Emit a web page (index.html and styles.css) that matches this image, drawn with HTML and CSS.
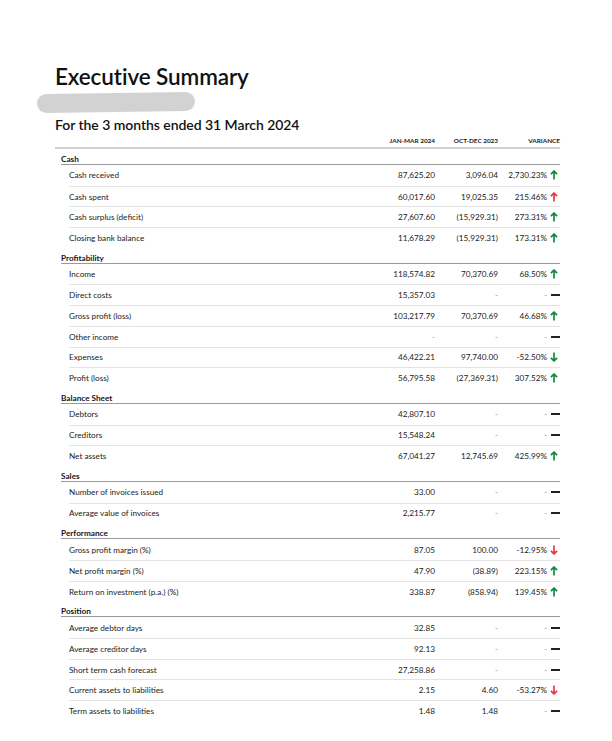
FILE: index.html
```html
<!DOCTYPE html>
<html>
<head>
<meta charset="utf-8">
<link rel="stylesheet" href="styles.css">
<title>Executive Summary</title>
</head>
<body>
<svg width="0" height="0" class="defs">
  <defs>
    <symbol id="up" viewBox="0 0 8 10"><path d="M4 9.6V1.2M0.9 4.2L4 1.1L7.1 4.2" fill="none" stroke="currentColor" stroke-width="1.7" stroke-linecap="butt" stroke-linejoin="miter"/></symbol>
    <symbol id="down" viewBox="0 0 8 10"><path d="M4 0.4V8.8M0.9 5.8L4 8.9L7.1 5.8" fill="none" stroke="currentColor" stroke-width="1.7" stroke-linecap="butt" stroke-linejoin="miter"/></symbol>
  </defs>
</svg>
<div class="page">
  <h1 class="title">Executive Summary</h1>
  <div class="redact"></div>
  <h2 class="subtitle">For the 3 months ended 31 March 2024</h2>

  <div class="table">
    <div class="thead">
      <span class="lbl"></span>
      <span class="c1">JAN-MAR 2024</span>
      <span class="c2">OCT-DEC 2023</span>
      <span class="c3h">VARIANCE</span>
    </div>

    <div class="section">
      <div class="sec-title">Cash</div>
      <div class="row"><span class="lbl">Cash received</span><span class="c1">87,625.20</span><span class="c2">3,096.04</span><span class="c3">2,730.23%</span><span class="ic"><svg class="arrow good"><use href="#up"/></svg></span></div>
      <div class="row"><span class="lbl">Cash spent</span><span class="c1">60,017.60</span><span class="c2">19,025.35</span><span class="c3">215.46%</span><span class="ic"><svg class="arrow bad"><use href="#up"/></svg></span></div>
      <div class="row"><span class="lbl">Cash surplus (deficit)</span><span class="c1">27,607.60</span><span class="c2">(15,929.31)</span><span class="c3">273.31%</span><span class="ic"><svg class="arrow good"><use href="#up"/></svg></span></div>
      <div class="row"><span class="lbl">Closing bank balance</span><span class="c1">11,678.29</span><span class="c2">(15,929.31)</span><span class="c3">173.31%</span><span class="ic"><svg class="arrow good"><use href="#up"/></svg></span></div>
    </div>

    <div class="section">
      <div class="sec-title">Profitability</div>
      <div class="row"><span class="lbl">Income</span><span class="c1">118,574.82</span><span class="c2">70,370.69</span><span class="c3">68.50%</span><span class="ic"><svg class="arrow good"><use href="#up"/></svg></span></div>
      <div class="row"><span class="lbl">Direct costs</span><span class="c1">15,357.03</span><span class="c2 nil">-</span><span class="c3 nil">-</span><span class="ic"><i class="dash"></i></span></div>
      <div class="row"><span class="lbl">Gross profit (loss)</span><span class="c1">103,217.79</span><span class="c2">70,370.69</span><span class="c3">46.68%</span><span class="ic"><svg class="arrow good"><use href="#up"/></svg></span></div>
      <div class="row"><span class="lbl">Other income</span><span class="c1 nil">-</span><span class="c2 nil">-</span><span class="c3 nil">-</span><span class="ic"><i class="dash"></i></span></div>
      <div class="row"><span class="lbl">Expenses</span><span class="c1">46,422.21</span><span class="c2">97,740.00</span><span class="c3">-52.50%</span><span class="ic"><svg class="arrow good"><use href="#down"/></svg></span></div>
      <div class="row"><span class="lbl">Profit (loss)</span><span class="c1">56,795.58</span><span class="c2">(27,369.31)</span><span class="c3">307.52%</span><span class="ic"><svg class="arrow good"><use href="#up"/></svg></span></div>
    </div>

    <div class="section">
      <div class="sec-title">Balance Sheet</div>
      <div class="row"><span class="lbl">Debtors</span><span class="c1">42,807.10</span><span class="c2 nil">-</span><span class="c3 nil">-</span><span class="ic"><i class="dash"></i></span></div>
      <div class="row"><span class="lbl">Creditors</span><span class="c1">15,548.24</span><span class="c2 nil">-</span><span class="c3 nil">-</span><span class="ic"><i class="dash"></i></span></div>
      <div class="row"><span class="lbl">Net assets</span><span class="c1">67,041.27</span><span class="c2">12,745.69</span><span class="c3">425.99%</span><span class="ic"><svg class="arrow good"><use href="#up"/></svg></span></div>
    </div>

    <div class="section">
      <div class="sec-title">Sales</div>
      <div class="row"><span class="lbl">Number of invoices issued</span><span class="c1">33.00</span><span class="c2 nil">-</span><span class="c3 nil">-</span><span class="ic"><i class="dash"></i></span></div>
      <div class="row"><span class="lbl">Average value of invoices</span><span class="c1">2,215.77</span><span class="c2 nil">-</span><span class="c3 nil">-</span><span class="ic"><i class="dash"></i></span></div>
    </div>

    <div class="section">
      <div class="sec-title">Performance</div>
      <div class="row"><span class="lbl">Gross profit margin (%)</span><span class="c1">87.05</span><span class="c2">100.00</span><span class="c3">-12.95%</span><span class="ic"><svg class="arrow bad"><use href="#down"/></svg></span></div>
      <div class="row"><span class="lbl">Net profit margin (%)</span><span class="c1">47.90</span><span class="c2">(38.89)</span><span class="c3">223.15%</span><span class="ic"><svg class="arrow good"><use href="#up"/></svg></span></div>
      <div class="row"><span class="lbl">Return on investment (p.a.) (%)</span><span class="c1">338.87</span><span class="c2">(858.94)</span><span class="c3">139.45%</span><span class="ic"><svg class="arrow good"><use href="#up"/></svg></span></div>
    </div>

    <div class="section">
      <div class="sec-title">Position</div>
      <div class="row"><span class="lbl">Average debtor days</span><span class="c1">32.85</span><span class="c2 nil">-</span><span class="c3 nil">-</span><span class="ic"><i class="dash"></i></span></div>
      <div class="row"><span class="lbl">Average creditor days</span><span class="c1">92.13</span><span class="c2 nil">-</span><span class="c3 nil">-</span><span class="ic"><i class="dash"></i></span></div>
      <div class="row"><span class="lbl">Short term cash forecast</span><span class="c1">27,258.86</span><span class="c2 nil">-</span><span class="c3 nil">-</span><span class="ic"><i class="dash"></i></span></div>
      <div class="row"><span class="lbl">Current assets to liabilities</span><span class="c1">2.15</span><span class="c2">4.60</span><span class="c3">-53.27%</span><span class="ic"><svg class="arrow bad"><use href="#down"/></svg></span></div>
      <div class="row"><span class="lbl">Term assets to liabilities</span><span class="c1">1.48</span><span class="c2">1.48</span><span class="c3 nil">-</span><span class="ic"><i class="dash"></i></span></div>
    </div>
  </div>
</div>
</body>
</html>
```

FILE: styles.css
```css
* { box-sizing: border-box; }
html, body { margin: 0; padding: 0; background: #ffffff; }
body {
  font-family: Lato, "Noto Sans", "Liberation Sans", sans-serif;
  color: #222;
}
.defs { position: absolute; width: 0; height: 0; overflow: hidden; }

.page {
  width: 612px;
  padding: 64px 52px 0 55px;
}

.title {
  margin: 0;
  font-size: 22.5px;
  line-height: 26px;
  font-weight: 600;
  color: #111;
  letter-spacing: -0.1px;
}

.redact {
  margin: 3px 0 0 -18px;
  width: 158px;
  height: 19px;
  border-radius: 10px;
  background: #d2d2d2;
  filter: blur(0.7px);
  transform: rotate(-0.8deg);
}

.subtitle {
  margin: 4px 0 1px;
  font-size: 14px;
  line-height: 18px;
  font-weight: 600;
  color: #111;
  letter-spacing: -0.05px;
}

.table { width: 505px; }

.thead {
  display: flex;
  align-items: center;
  height: 11px;
  line-height: 8px;
  padding-bottom: 1px;
  border-bottom: 2px solid #cfcfcf;
  font-size: 6.4px;
  font-weight: 700;
  color: #222;
  box-sizing: content-box;
  padding-top: 0;
}
.thead .lbl { flex: 1; }
.thead .c1 { width: 70px; text-align: right; }
.thead .c2 { width: 63px; text-align: right; }
.thead .c3h { width: 62px; text-align: right; }

.section { margin-left: 6px; }

.sec-title {
  padding-top: 6px;
  height: 16px;
  line-height: 9px;
  font-size: 8.2px;
  font-weight: 700;
  color: #151515;
  border-bottom: 1px solid #9a9a9a;
}

.row {
  display: flex;
  align-items: center;
  height: 20.7px;
  margin-left: 8px;
  font-size: 8.2px;
  color: #222;
  border-top: 1px solid #e4e4e4;
}
.sec-title + .row { border-top: none; }

.row .lbl { flex: 1; }
.row .c1 { width: 70px; text-align: right; }
.row .c2 { width: 63px; text-align: right; }
.row .c3 { width: 49px; text-align: right; }
.row .nil { color: #9a9a9a; }

.ic {
  width: 13px;
  height: 12px;
  display: flex;
  align-items: center;
  justify-content: flex-end;
}
.arrow {
  width: 8px;
  height: 10px;
  margin-right: 2px;
}
.good { color: #0f8a3c; }
.bad { color: #e8364c; }

.dash {
  display: block;
  width: 9px;
  height: 2px;
  background: #1a2230;
}
```
